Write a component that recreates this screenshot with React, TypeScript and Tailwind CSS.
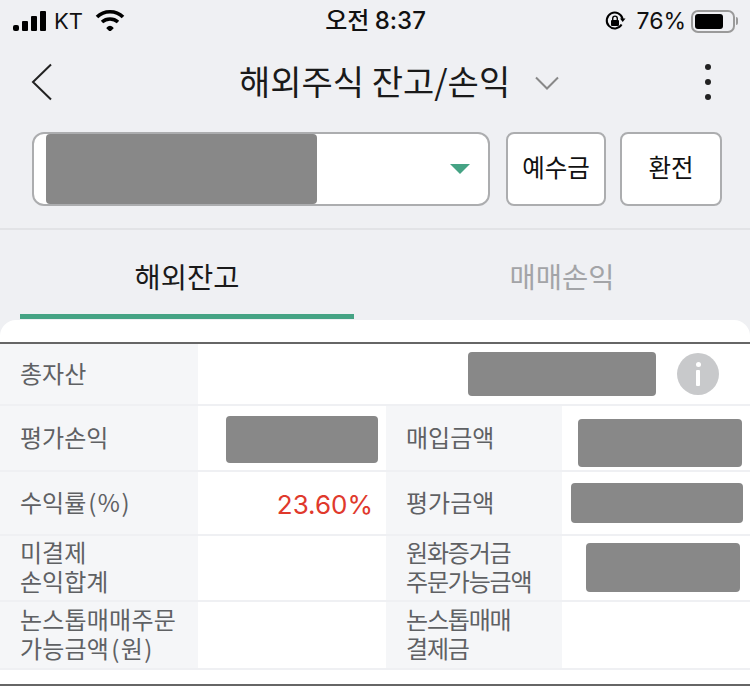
import React from "react";

const korean = "font-['Noto_Sans_CJK_KR','Liberation_Sans',sans-serif]";

const Redacted = ({ className }: { className: string }) => (
  <div className={`rounded-[4px] bg-[#888888] ${className}`}></div>
);

const Label = ({ children, className = "" }: { children: React.ReactNode; className?: string }) => (
  <div className="flex items-center bg-[#f5f6f8] pb-1 pl-5 text-[24px] leading-[29px] text-[#5f6164]">
    <div className={className}>{children}</div>
  </div>
);

const StatusBar = () => (
  <div className="flex h-[42px] items-center justify-between pl-[13px] pr-[12px] font-['Inter',sans-serif] text-[22px] text-[#111]">
    <div className="flex w-[240px] items-center">
      <div className="flex items-end gap-[3px]">
        <div className="h-[6px] w-[6px] rounded-[2px] bg-black"></div>
        <div className="h-[10px] w-[6px] rounded-[1px] bg-black"></div>
        <div className="h-[15px] w-[6px] rounded-[1px] bg-black"></div>
        <div className="h-[20px] w-[6px] rounded-[1px] bg-black"></div>
      </div>
      <span className="ml-[8px] leading-none">KT</span>
      <svg className="mb-[2px] ml-[12px]" width="30" height="22" viewBox="0 0 30 22" fill="none" stroke="#000" strokeWidth="3.6">
        <path d="M2 8 C9 1 21 1 28 8" />
        <path d="M7 13 C11.5 9 18.5 9 23 13" />
        <path d="M13 19 L15 21 L17 19 C16 17.6 14 17.6 13 19Z" fill="#000" strokeWidth="2.6" />
      </svg>
    </div>
    <div className={`${korean} mb-[3px] text-[24px] leading-none font-medium`}>
      오전 <span className="font-['Inter',sans-serif]">8:37</span>
    </div>
    <div className="flex w-[240px] items-center justify-end">
      <svg width="22" height="22" viewBox="0 0 22 22" fill="none">
        <path d="M17.6 14.6 A8 8 0 1 1 18.6 9" stroke="#000" strokeWidth="2" />
        <path d="M16 8.5 H21.5 L18.7 12Z" fill="#000" />
        <rect x="7" y="10" width="8" height="6" rx="1" fill="#000" />
        <path d="M8.7 10 V8.4 A2.3 2.3 0 0 1 13.3 8.4 V10" stroke="#000" strokeWidth="1.4" />
      </svg>
      <span className="ml-[10px] text-[23px] leading-none">76%</span>
      <div className="ml-[5px] flex h-[23px] w-[44px] items-center rounded-[7px] border-2 border-[#9a9a9a] p-[2px]">
        <div className="h-[15px] w-[28px] rounded-[3px] bg-black"></div>
      </div>
      <div className="ml-[1px] h-[8px] w-[2px] rounded-r-full bg-[#9a9a9a]"></div>
    </div>
  </div>
);

const App: React.FC = () => {
  return (
    <div className={`h-[687px] w-[750px] overflow-hidden bg-[#eff0f3] ${korean}`}>
      <StatusBar />

      <div className="flex h-[80px] items-center pl-[31px] pr-[39px]">
        <svg width="22" height="38" viewBox="0 0 22 38" fill="none" stroke="#222" strokeWidth="2">
          <path d="M20 1.5 L2 19 L20 36.5" />
        </svg>
        <h1 className="mb-[2px] ml-[186px] text-[34px] leading-none font-normal text-[#1a1a1a]">해외주식 잔고/손익</h1>
        <svg className="ml-[25px] mt-[2px]" width="24" height="14" viewBox="0 0 24 14" fill="none" stroke="#888" strokeWidth="2">
          <path d="M1 1.5 L12 12.5 L23 1.5" />
        </svg>
        <div className="ml-auto flex flex-col gap-[9px]">
          <div className="h-[6px] w-[6px] rounded-full bg-[#222]"></div>
          <div className="h-[6px] w-[6px] rounded-full bg-[#222]"></div>
          <div className="h-[6px] w-[6px] rounded-full bg-[#222]"></div>
        </div>
      </div>

      <div className="mt-[10px] flex h-[74px] pl-8">
        <div className="flex w-[458px] items-center rounded-[12px] border-2 border-[#acadaf] bg-white pl-3 pr-[18px]">
          <Redacted className="h-[70px] w-[271px]" />
          <div className="ml-auto h-0 w-0 border-x-[10px] border-t-[10px] border-x-transparent border-t-[#45a384]"></div>
        </div>
        <button className="ml-4 w-[100px] rounded-[8px] border-2 border-[#acadaf] bg-white pb-1 text-[24.5px] text-[#111]">예수금</button>
        <button className="ml-[14px] w-[102px] rounded-[8px] border-2 border-[#acadaf] bg-white pb-1 text-[24.5px] text-[#111]">환전</button>
      </div>

      <div className="mt-[22px] h-[2px] bg-[#e2e3e6]"></div>

      <div className="grid h-[90px] grid-cols-[374px_376px] text-[28.5px] leading-none">
        <div className="px-5">
          <div className="flex h-[89px] items-center justify-center border-b-[5px] border-[#45a384] pt-[9px] text-[#1a1a1a]">해외잔고</div>
        </div>
        <div className="flex h-[89px] items-center justify-center pb-[5px] pt-[9px] text-[#a3a4a7]">매매손익</div>
      </div>

      <div className="h-[367px] rounded-t-[16px] bg-white pt-[22px]">
        <div className="border-y-2 border-[#666666] pb-[14px]">
          <div className="grid h-[62px] grid-cols-[198px_552px] border-b-2 border-[#eff0f3]">
            <Label>총자산</Label>
            <div className="flex items-center justify-end pr-[31px]">
              <Redacted className="h-[44px] w-[188px]" />
              <div className="ml-[21px] flex h-[42px] w-[42px] flex-col items-center justify-center gap-[3px] rounded-full bg-[#c8c9cb]">
                <div className="h-[5px] w-[5px] rounded-full bg-white"></div>
                <div className="h-[16px] w-[4px] rounded-[1px] bg-white"></div>
              </div>
            </div>
          </div>

          <div className="grid h-[66px] grid-cols-[198px_188px_176px_188px] border-b-2 border-[#eff0f3]">
            <Label>평가손익</Label>
            <div className="flex items-center justify-end pr-2">
              <Redacted className="mt-[2px] h-[47px] w-[152px]" />
            </div>
            <Label>매입금액</Label>
            <div className="flex items-center justify-end pr-2">
              <Redacted className="mt-[9px] h-[48px] w-[164px]" />
            </div>
          </div>

          <div className="grid h-[64px] grid-cols-[198px_188px_176px_188px] border-b-2 border-[#eff0f3]">
            <Label>
              수익률<span className="ml-[2px] tracking-[1.5px]">(%)</span>
            </Label>
            <div className="flex items-center justify-end pr-[13px] pt-[3px] font-['Inter','Liberation_Sans',sans-serif] text-[26px] text-[#e0392c]">23.60%</div>
            <Label>평가금액</Label>
            <div className="flex items-center justify-end pr-[7px]">
              <Redacted className="h-[40px] w-[172px]" />
            </div>
          </div>

          <div className="grid h-[66px] grid-cols-[198px_188px_176px_188px] border-b-2 border-[#eff0f3]">
            <Label>
              미결제
              <br />
              손익합계
            </Label>
            <div></div>
            <Label className="tracking-[-1.2px]">
              원화증거금
              <br />
              주문가능금액
            </Label>
            <div className="flex items-center justify-end pr-[10px]">
              <Redacted className="mb-[1px] h-[49px] w-[154px]" />
            </div>
          </div>

          <div className="grid h-[68px] grid-cols-[198px_188px_176px_188px] border-b-2 border-[#eff0f3]">
            <Label className="tracking-[0.2px]">
              논스톱매매주문
              <br />
              가능금액<span className="ml-[2px] tracking-[1.5px]">(원)</span>
            </Label>
            <div></div>
            <Label className="tracking-[-1.2px]">
              논스톱매매
              <br />
              결제금
            </Label>
            <div></div>
          </div>
        </div>
      </div>
    </div>
  );
};

export default App;
